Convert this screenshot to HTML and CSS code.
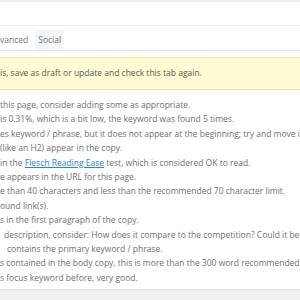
FILE: index.html
```html
<!DOCTYPE html>
<html lang="en">
<head>
  <meta charset="UTF-8">
  <title>SEO Analysis</title>
  <link rel="stylesheet" href="styles.css">
</head>
<body>
  <div class="page">
    <div class="top-strip"></div>
    <div class="title-area"></div>
    <div class="tabs">
      <span class="tab">vanced</span>
      <span class="tab active">Social</span>
    </div>
    <div class="notice">is, save as draft or update and check this tab again.</div>
    <ul class="analysis">
      <li>this page, consider adding some as appropriate.</li>
      <li>is 0.31%, which is a bit low, the keyword was found 5 times.</li>
      <li>es keyword / phrase, but it does not appear at the beginning; try and move it</li>
      <li>(like an H2) appear in the copy.</li>
      <li>in the <a href="#">Flesch Reading Ease</a> test, which is considered OK to read.</li>
      <li>e appears in the URL for this page.</li>
      <li>e than 40 characters and less than the recommended 70 character limit.</li>
      <li>ound link(s).</li>
      <li>s in the first paragraph of the copy.</li>
      <li class="indent">description, consider: How does it compare to the competition? Could it be</li>
      <li class="indent-more">contains the primary keyword / phrase.</li>
      <li>s contained in the body copy, this is more than the 300 word recommended</li>
      <li>s focus keyword before, very good.</li>
    </ul>
    <div class="footer"></div>
  </div>
</body>
</html>
```

FILE: styles.css
```css
body {
  margin: 0;
  font-family: "Open Sans", "DejaVu Sans", sans-serif;
  font-size: 8.5px;
  color: #707070;
  background-color: #fff;
  overflow: hidden;
}
.page {
  width: 300px;
  height: 300px;
  display: flex;
  flex-direction: column;
}
.top-strip {
  height: 2px;
  background-color: #ececec;
}
.title-area {
  height: 23px;
  border-bottom: 1px solid #ececec;
}
.tabs {
  display: flex;
  align-items: flex-end;
  height: 24px;
  border-bottom: 1px solid #e4e4e4;
}
.tab {
  padding: 4px 3px 5px;
  color: #777;
}
.tab:first-child {
  padding-left: 0;
  margin-right: 4px;
}
.tab.active {
  background-color: #f4f6f8;
  color: #6f7780;
}
.notice {
  margin-top: 6px;
  padding: 9px 0 10px;
  line-height: 12px;
  background-color: #fffbd3;
  border-top: 1px solid #f1e8a6;
  border-bottom: 1px solid #ece2a0;
  color: #5a5a5a;
}
.analysis {
  list-style: none;
  margin: 8px 0 0;
  padding: 0;
  line-height: 14.4px;
  white-space: nowrap;
  overflow: hidden;
}
.analysis a {
  color: #2a86c0;
}
.analysis .indent {
  padding-left: 4px;
}
.analysis .indent-more {
  padding-left: 7px;
}
.footer {
  margin-top: 4px;
  border-top: 1px solid #e2e2e2;
  flex: 1;
  background-color: #f1f1f1;
}
```
